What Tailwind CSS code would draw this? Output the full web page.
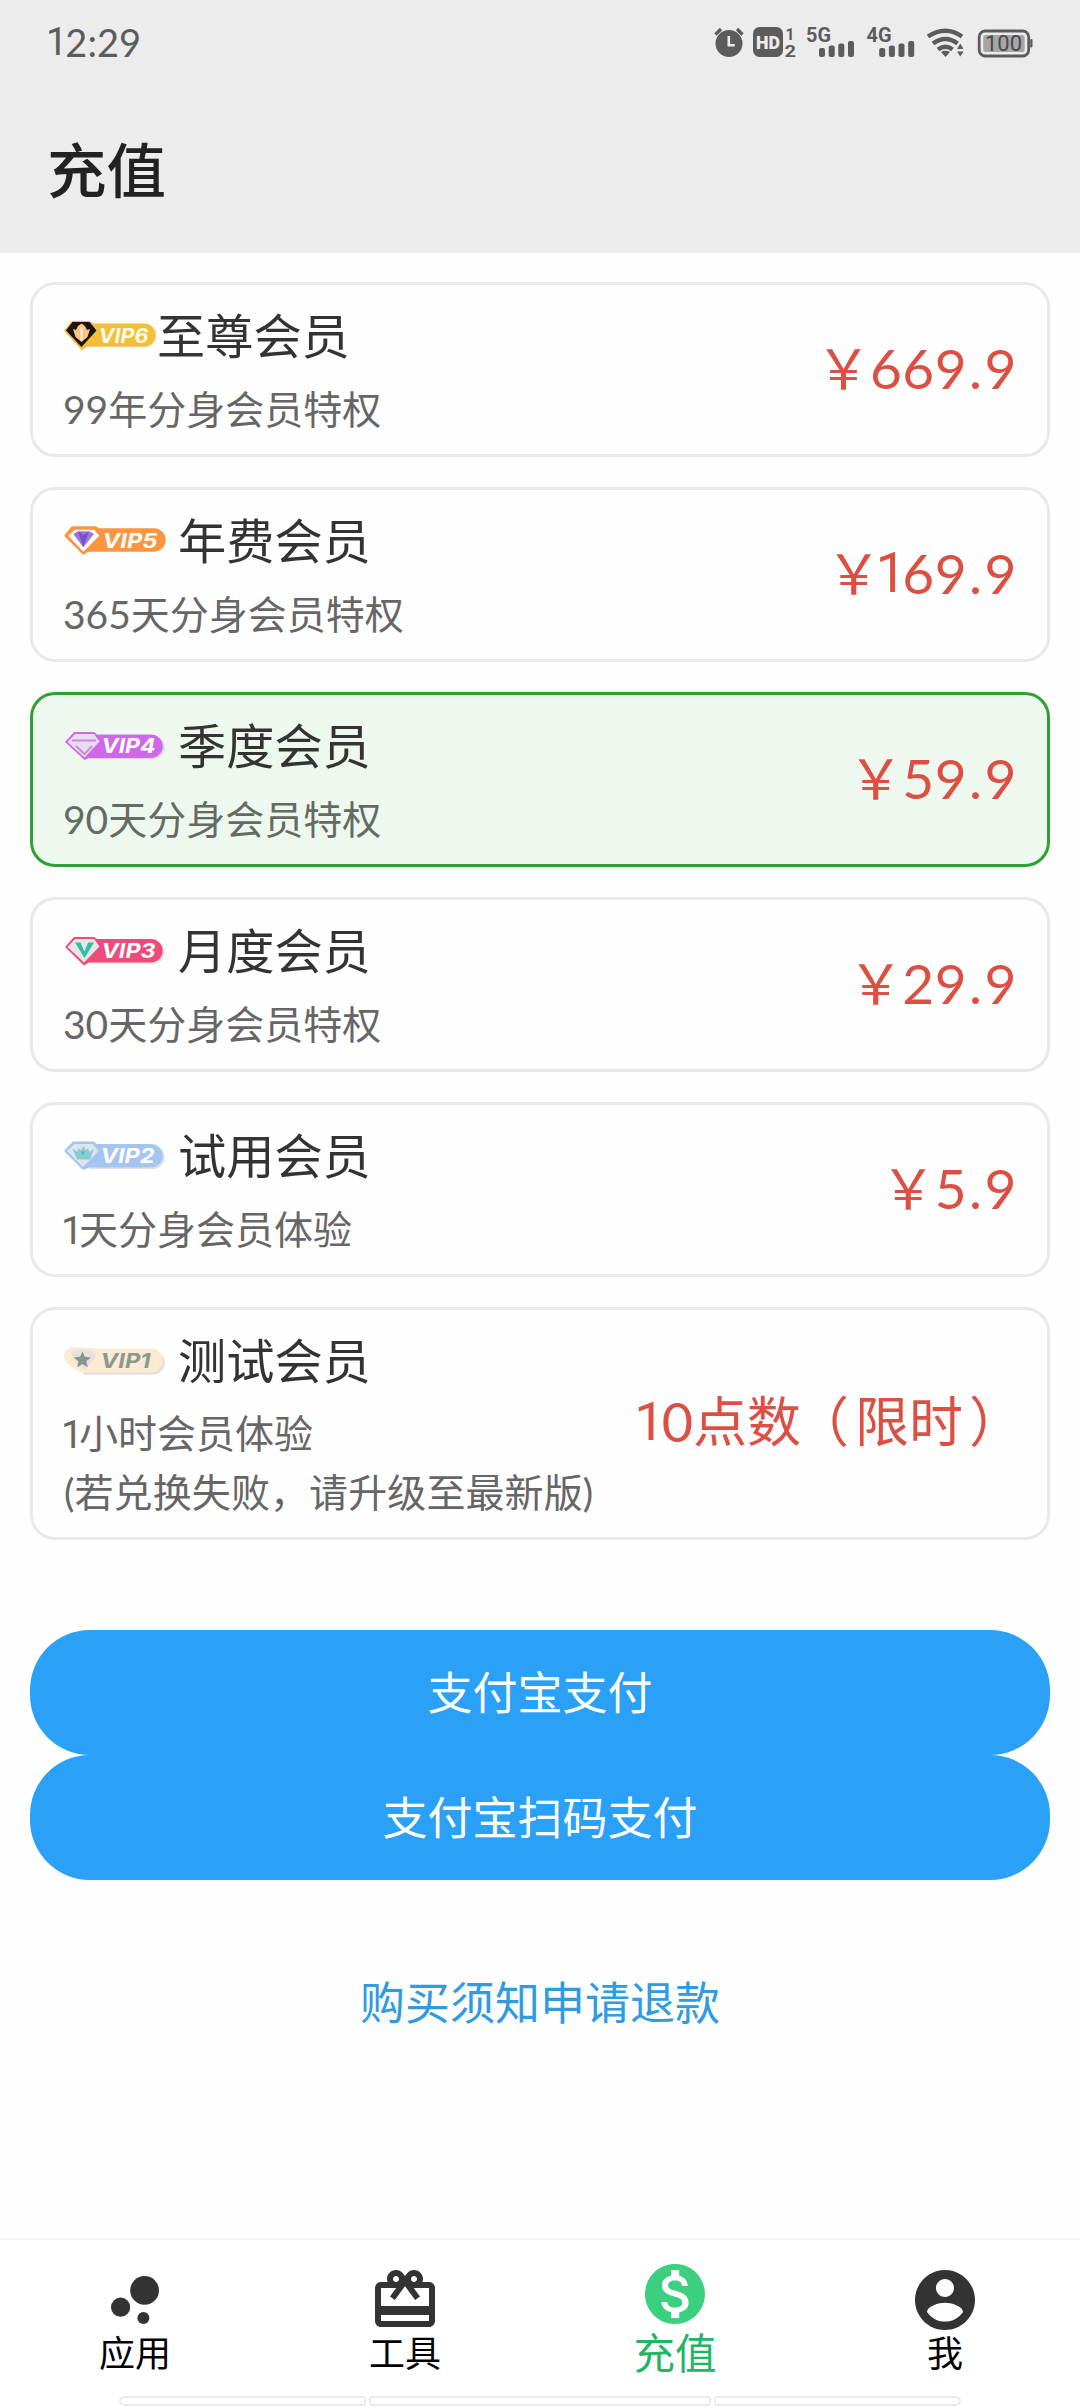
<!DOCTYPE html>
<html lang="zh-CN">
<head>
<meta charset="utf-8">
<title>充值</title>
<script src="https://cdn.jsdelivr.net/npm/@tailwindcss/browser@4"></script>
</head>
<body class="w-[1080px] h-[2408px] overflow-hidden bg-[#fefefe] font-[Lato,'Noto_Sans_CJK_SC',sans-serif] flex flex-col text-[#333]">

<header class="h-[253px] shrink-0 bg-[#ececec] flex flex-col">
  <div class="h-[84px] flex items-center justify-between pl-[46px] pr-[47px] text-[#5c5c5c]">
    <span class="text-[38px] leading-[44px] flex"><span class="font-[Roboto] tracking-[-2px]">1</span>2:29</span>
    <svg class="w-[320px] h-[40px]" viewBox="713 22 320 40" fill="#5c5c5c">
      <circle cx="729" cy="43.500" r="13.500"/>
      <path d="M715.500 34.500l5.500-5.500M742.500 34.500l-5.500-5.500" stroke="#5c5c5c" stroke-width="3.200"/>
      <path d="M728.800 36v9.200h6" fill="none" stroke="#ececec" stroke-width="2.600"/>
      <rect x="753" y="27" width="30" height="30" rx="6.500"/>
      <text x="756" y="49" font-family="Roboto" font-size="19" font-weight="900" fill="#ececec" textLength="24" lengthAdjust="spacingAndGlyphs">HD</text>
      <text x="785.500" y="39.500" font-family="Roboto" font-size="17" font-weight="700" textLength="9" lengthAdjust="spacingAndGlyphs">1</text>
      <text x="784.500" y="57" font-family="Roboto" font-size="17" font-weight="700" textLength="11.500" lengthAdjust="spacingAndGlyphs">2</text>
      <text x="806" y="41.500" font-family="Roboto" font-size="20" font-weight="700" textLength="25" lengthAdjust="spacingAndGlyphs">5G</text>
      <text x="866.500" y="41.500" font-family="Roboto" font-size="20" font-weight="700" textLength="25" lengthAdjust="spacingAndGlyphs">4G</text>
      <g id="bars"><rect x="819" y="48" width="6" height="9" rx="2"/><rect x="828.700" y="45.500" width="6" height="11.500" rx="2"/><rect x="838.300" y="43.500" width="6" height="13.500" rx="2"/><rect x="848" y="41" width="6" height="16" rx="2"/></g>
      <use href="#bars" x="60.200"/>
      <g fill="none" stroke="#5c5c5c" stroke-width="4.400"><path d="M928 36.500Q945.500 25 962 36.500"/><path d="M933 43.500Q945.500 34.500 957.500 43.500"/><path d="M938 49.500Q945.500 44 952.500 49.500"/></g>
      <path d="M941 52q4.500-2.500 9 0l-4.500 5zM957 49l3.300-5.500 3.200 5.500zM957 51.500h6.500l-3.200 5z"/>
      <rect x="979.200" y="31" width="49.500" height="25" rx="6" fill="none" stroke="#5c5c5c" stroke-width="2.800"/>
      <rect x="983.200" y="35" width="41.500" height="17" rx="2.500" fill="#a6a6a6"/>
      <rect x="1030.200" y="39" width="2.300" height="8.500" rx="1"/>
      <text x="985" y="51" font-family="Roboto" font-size="21.500" fill="#4a4a4a" textLength="37" lengthAdjust="spacingAndGlyphs">100</text>
    </svg>
  </div>
  <h1 class="pl-[47px] pt-[48px] text-[59.5px] leading-[70px] font-medium text-[#222] font-['Noto_Sans_CJK_SC']">充值</h1>
</header>

<main class="flex flex-col px-[30px] pt-[29px] h-[1985px] shrink-0">
  <section class="flex flex-col gap-[30px]">

    <article class="h-[175px] rounded-[25px] border-3 border-[#e9e9e9] pl-[30px] pr-[30px] pt-[13px] flex justify-between">
      <div>
        <div class="h-[74px] flex items-center">
          <svg class="w-[94px] h-[32px]" viewBox="0 0 94 32">
            <path d="M1 12L9 2h17l6 3h50a11.500 11.500 0 0 1 0 23.500H24L19 32z" fill="#d8d0c0" opacity=".5"/>
            <path d="M1 11.500L9 2h16l6 2.500h50a11.500 11.500 0 0 1 0 23H24L18.500 31z" fill="#f2bf36"/>
            <path d="M3 11.500L9.500 3h17L33.500 11.500 18.500 28z" fill="#1c1210"/>
            <path d="M10 10l3 1 2-4 3.500-2.500L22 7l2 4 3-1-2.500 8-6 5-6-5z" fill="#f9c48c"/>
            <path d="M18.500 8v13" stroke="#fff0d0" stroke-width="2"/>
            <text x="35.500" y="23.500" font-family="Inter" font-size="20" font-weight="700" font-style="italic" fill="#fffbe8" textLength="50" lengthAdjust="spacingAndGlyphs">VIP6</text>
          </svg>
          <h2 class="text-[48.2px] leading-[60px]">至尊会员</h2>
        </div>
        <p class="mt-[8px] text-[39px] leading-[58px] text-[#666]">99年分身会员特权</p>
      </div>
      <div class="self-center -mt-[17px] flex text-[55px] leading-[60px] tracking-[0.5px] text-[#dc5044]"><span class="tracking-[-1px]">￥</span><span>669</span><span class="mx-[2px]">.</span><span>9</span></div>
    </article>

    <article class="h-[175px] rounded-[25px] border-3 border-[#e9e9e9] pl-[30px] pr-[30px] pt-[13px] flex justify-between">
      <div>
        <div class="h-[74px] flex items-center">
          <svg class="w-[104px] h-[32px]" viewBox="0 0 104 32">
            <path d="M1 11.700L8.700 2.300H33l3 2H91a11.700 11.700 0 0 1 0 23.400H25L20.300 31z" fill="#fb9540"/>
            <path d="M5.300 11.700L12 5.700H31L36.300 11.700 20.300 27.700z" fill="#fff"/>
            <path d="M10.300 10L15 7.300H26L31 10 20.300 23.300z" fill="#9a77e0"/>
            <path d="M15 7.300L20.300 23.300 26 7.300 20.500 11z" fill="#7a50cf"/>
            <text x="39.500" y="23.500" font-family="Inter" font-size="20" font-weight="700" font-style="italic" fill="#fff" textLength="55" lengthAdjust="spacingAndGlyphs">VIP5</text>
          </svg>
          <h2 class="ml-[11px] text-[48.2px] leading-[60px]">年费会员</h2>
        </div>
        <p class="mt-[8px] text-[39px] leading-[58px] text-[#666]">365天分身会员特权</p>
      </div>
      <div class="self-center -mt-[17px] flex text-[55px] leading-[60px] tracking-[0.5px] text-[#dc5044]"><span class="tracking-[-6px]">￥</span><span class="font-[Roboto] tracking-[-4px]">1</span><span>69</span><span class="mx-[2px]">.</span><span>9</span></div>
    </article>

    <article class="h-[175px] rounded-[25px] border-3 border-[#2fa034] bg-[#eff8ef] pl-[30px] pr-[30px] pt-[13px] flex justify-between">
      <div>
        <div class="h-[74px] flex items-center">
          <svg class="w-[104px] h-[32px]" viewBox="0 0 104 32">
            <path d="M28 6.500H90a11.700 11.700 0 0 1 0 23.400H26z" fill="#c9b5d0" opacity=".5"/>
            <path d="M2 13L11 3H31l3 2.500H88a11.700 11.700 0 0 1 0 23.400H26L21.500 31z" fill="#cf68e8"/>
            <path d="M4.500 13L12 5H31L36.500 12.500 21.500 28.500z" fill="#e9dcf0"/>
            <path d="M9 11.500H33M13 17L21.500 25 29 17" fill="none" stroke="#c98ad8" stroke-width="2"/>
            <text x="38.500" y="24" font-family="Inter" font-size="20" font-weight="700" font-style="italic" fill="#fff" textLength="54" lengthAdjust="spacingAndGlyphs">VIP4</text>
          </svg>
          <h2 class="ml-[11px] text-[48.2px] leading-[60px]">季度会员</h2>
        </div>
        <p class="mt-[8px] text-[39px] leading-[58px] text-[#646a64]">90天分身会员特权</p>
      </div>
      <div class="self-center -mt-[17px] flex text-[55px] leading-[60px] tracking-[0.5px] text-[#dc5044]"><span class="tracking-[-1px]">￥</span><span>59</span><span class="mx-[2px]">.</span><span>9</span></div>
    </article>

    <article class="h-[175px] rounded-[25px] border-3 border-[#e9e9e9] pl-[30px] pr-[30px] pt-[13px] flex justify-between">
      <div>
        <div class="h-[74px] flex items-center">
          <svg class="w-[104px] h-[32px]" viewBox="0 0 104 32">
            <path d="M28 6.500H90a11.700 11.700 0 0 1 0 23.400H26z" fill="#d8c5ca" opacity=".5"/>
            <path d="M2 13L11 3H31l3 2H88a11.700 11.700 0 0 1 0 23.400H26L21 31.500z" fill="#ee4b7c"/>
            <path d="M4.500 13L12 5H31L36.500 12.500 21 28.500z" fill="#e6e6e8"/>
            <path d="M12 8.500h5.500l4 9 3.500-9h6L21.500 24z" fill="#2fbfa3"/>
            <path d="M19 9l3 7" stroke="#e6e6e8" stroke-width="1.500"/>
            <text x="38.500" y="24" font-family="Inter" font-size="20" font-weight="700" font-style="italic" fill="#fff" textLength="54" lengthAdjust="spacingAndGlyphs">VIP3</text>
          </svg>
          <h2 class="ml-[11px] text-[48.2px] leading-[60px]">月度会员</h2>
        </div>
        <p class="mt-[8px] text-[39px] leading-[58px] text-[#666]">30天分身会员特权</p>
      </div>
      <div class="self-center -mt-[17px] flex text-[55px] leading-[60px] tracking-[0.5px] text-[#dc5044]"><span class="tracking-[-1px]">￥</span><span>29</span><span class="mx-[2px]">.</span><span>9</span></div>
    </article>

    <article class="h-[175px] rounded-[25px] border-3 border-[#e9e9e9] pl-[30px] pr-[30px] pt-[13px] flex justify-between">
      <div>
        <div class="h-[74px] flex items-center">
          <svg class="w-[104px] h-[32px]" viewBox="0 0 104 32">
            <path d="M28 6.500H90a11.700 11.700 0 0 1 0 23.400H26z" fill="#c5cbd8" opacity=".6"/>
            <path d="M1 12L10 2.500H31l3 2.500H88a11.700 11.700 0 0 1 0 23.400H26L20 31z" fill="#a3c5f0"/>
            <path d="M4 12L11.500 5H30L35.500 12 20 28z" fill="#dbe6f0"/>
            <path d="M9.500 9.500l5 3.500 1-4 2.500 2.500 2.500-4.500 2.500 4.500L25 9l1.500 4 4.500-3.500-4 11h-13z" fill="#8acbd0"/>
            <path d="M18 12.500l2 3.500 2-3.500z" fill="#4fb3c4"/>
            <text x="37.500" y="24" font-family="Inter" font-size="20" font-weight="700" font-style="italic" fill="#fff" textLength="54" lengthAdjust="spacingAndGlyphs">VIP2</text>
          </svg>
          <h2 class="ml-[11px] text-[48.2px] leading-[60px]">试用会员</h2>
        </div>
        <p class="mt-[8px] ml-[-2px] text-[39px] leading-[58px] text-[#666]"><span class="tracking-[-4px] font-[Roboto]">1</span>天分身会员体验</p>
      </div>
      <div class="self-center -mt-[17px] flex text-[55px] leading-[60px] tracking-[0.5px] text-[#dc5044]"><span class="tracking-[-1px]">￥</span><span>5</span><span class="mx-[2px]">.</span><span>9</span></div>
    </article>

    <article class="h-[233px] rounded-[25px] border-3 border-[#e9e9e9] pl-[30px] pr-[30px] pt-[13px] flex justify-between">
      <div>
        <div class="h-[74px] flex items-center">
          <svg class="w-[104px] h-[32px]" viewBox="0 0 104 32">
            <path d="M28 7H90a11.700 11.700 0 0 1 0 23.400H20z" fill="#d5d0c8" opacity=".7"/>
            <path d="M1 14Q0 4 12 3L32 4.500H88a12 12 0 0 1 0 24H18Q8 25 1 14z" fill="#fcead2"/>
            <path d="M8 8l5-2.500H28l5 6.500-11 14Q12 22 8 8z" fill="#e6e2dc"/>
            <path d="M19.500 7.500l2.200 5.300 6.300.7-4.800 3.700 1.600 6-5.300-3.200-5.300 3.200 1.300-6-4.700-3.700 6.200-.7z" fill="#849490"/>
            <text x="37.500" y="23.500" font-family="Inter" font-size="20" font-weight="700" font-style="italic" fill="#8a9a90" textLength="50" lengthAdjust="spacingAndGlyphs">VIP1</text>
          </svg>
          <h2 class="ml-[11px] text-[48.2px] leading-[60px]">测试会员</h2>
        </div>
        <p class="mt-[8px] ml-[-2px] text-[39px] leading-[57px] text-[#666]"><span class="tracking-[-4px] font-[Roboto]">1</span>小时会员体验<br><span class="ml-[3px] tracking-[0.1px]">(若兑换失败，请升级至最新版)</span></p>
      </div>
      <div class="self-center -mt-[17px] flex text-[54px] leading-[60px] text-[#dc5044] whitespace-nowrap"><span class="font-[Roboto] tracking-[-3px]">1</span><span>0点数</span><span class="-ml-[6px] mr-[6px]">（</span><span>限时</span><span class="ml-[6px] -mr-[6px]">）</span></div>
    </article>
  </section>

  <button class="mt-[90px] h-[125px] rounded-[60px] bg-[#2aa1f7] text-white text-[45px] leading-[60px]">支付宝支付</button>
  <button class="h-[125px] rounded-[60px] bg-[#2aa1f7] text-white text-[45px] leading-[60px]">支付宝扫码支付</button>

  <p class="mt-[93px] text-center text-[45px] leading-[60px] text-[#2f9be2]"><a>购买须知</a><a>申请退款</a></p>
</main>

<nav class="h-[170px] shrink-0 border-t-2 border-[#f5f5f5] flex flex-col bg-white">
  <div class="h-[150px] grid grid-cols-4 text-black">
    <div class="flex flex-col items-center pt-[24px]">
      <svg class="w-[72px] h-[72px]" viewBox="0 0 24 24" fill="#333"><circle cx="7.200" cy="14.400" r="3.200"/><circle cx="14.800" cy="18" r="2"/><circle cx="15.200" cy="8.800" r="4.800"/></svg>
      <span class="-mt-[3px] text-[36px] leading-[40px]">应用</span>
    </div>
    <div class="flex flex-col items-center pt-[24px]">
      <svg class="w-[72px] h-[72px]" viewBox="0 0 24 24" fill="#333"><path d="M20 6h-2.180c.11-.31.18-.65.18-1 0-1.660-1.340-3-3-3-1.050 0-1.960.54-2.500 1.350l-.5.670-.5-.680C10.960 2.540 10.050 2 9 2 7.340 2 6 3.340 6 5c0 .35.07.69.18 1H4c-1.110 0-1.990.89-1.990 2L2 19c0 1.110.89 2 2 2h16c1.110 0 2-.89 2-2V8c0-1.110-.89-2-2-2zm-5-2c.55 0 1 .45 1 1s-.45 1-1 1-1-.45-1-1 .45-1 1-1zM9 4c.55 0 1 .45 1 1s-.45 1-1 1-1-.45-1-1 .45-1 1-1zm11 15H4v-2h16v2zm0-5H4V8h5.080L7 10.830 8.620 12 11 8.760l1-1.360 1 1.360L15.380 12 17 10.830 14.920 8H20v6z"/></svg>
      <span class="-mt-[3px] text-[36px] leading-[40px]">工具</span>
    </div>
    <div class="flex flex-col items-center pt-[18px]">
      <svg class="w-[72px] h-[72px]" viewBox="0 0 24 24" fill="#3bcf80"><path d="M12 2C6.480 2 2 6.480 2 12s4.480 10 10 10 10-4.480 10-10S17.520 2 12 2zm1.410 16.090V20h-2.670v-1.930c-1.710-.36-3.160-1.460-3.270-3.400h1.960c.1 1.050.82 1.870 2.650 1.870 1.960 0 2.400-.98 2.400-1.590 0-.83-.44-1.610-2.670-2.140-2.480-.6-4.180-1.620-4.180-3.670 0-1.720 1.390-2.840 3.110-3.210V4h2.670v1.950c1.860.45 2.790 1.860 2.850 3.390H14.300c-.05-1.110-.64-1.870-2.220-1.870-1.500 0-2.400.68-2.400 1.640 0 .84.65 1.390 2.670 1.910s4.180 1.390 4.180 3.910c-.01 1.830-1.380 2.830-3.120 3.160z"/></svg>
      <span class="text-[41.5px] leading-[46px] text-[#22b566]">充值</span>
    </div>
    <div class="flex flex-col items-center pt-[24px]">
      <svg class="w-[72px] h-[72px]" viewBox="0 0 24 24" fill="#333"><path d="M12 2C6.480 2 2 6.480 2 12s4.480 10 10 10 10-4.480 10-10S17.520 2 12 2zm0 3c1.660 0 3 1.340 3 3s-1.340 3-3 3-3-1.340-3-3 1.340-3 3-3zm0 14.200c-2.500 0-4.710-1.280-6-3.220.03-1.990 4-3.080 6-3.080 1.990 0 5.970 1.090 6 3.080-1.290 1.940-3.500 3.220-6 3.220z"/></svg>
      <span class="-mt-[3px] text-[36px] leading-[40px]">我</span>
    </div>
  </div>
  <div class="mt-[6px] flex justify-center gap-[3px] h-[10px]">
    <div class="w-[247px] border-2 border-[#ebebeb] rounded-l-[5px] rounded-r-[2px]"></div>
    <div class="w-[342px] border-2 border-[#ebebeb] rounded-[2px]"></div>
    <div class="w-[247px] border-2 border-[#ebebeb] rounded-r-[5px] rounded-l-[2px]"></div>
  </div>
</nav>
</body>
</html>
